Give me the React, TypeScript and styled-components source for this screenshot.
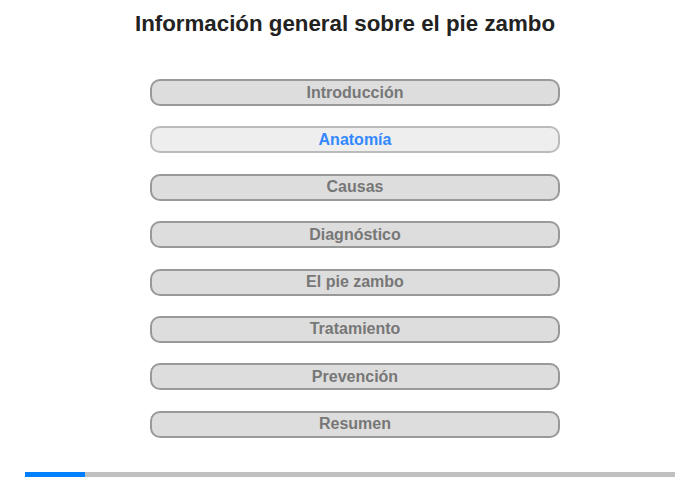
import React from "react";
import styled, { createGlobalStyle } from "styled-components";

const GlobalStyle = createGlobalStyle`
  body {
    margin: 0;
    background: #fff;
    font-family: "Liberation Sans", Arial, sans-serif;
  }
`;

const Page = styled.div`
  width: 700px;
  height: 480px;
  display: flex;
  flex-direction: column;
  align-items: center;
`;

const Title = styled.h1`
  margin: 11px 10px 0 0;
  font-size: 22.3px;
  line-height: 26px;
  font-weight: bold;
  color: #222;
  text-align: center;
`;

const Menu = styled.div`
  margin: 42px 0 0 10px;
  display: flex;
  flex-direction: column;
  gap: 20.4px;
`;

const Item = styled.div<{ $active?: boolean }>`
  box-sizing: border-box;
  width: 410px;
  height: 27px;
  border: 2px solid ${(p) => (p.$active ? "#bbb" : "#999")};
  border-radius: 10px;
  background: ${(p) => (p.$active ? "#eee" : "#ddd")};
  color: ${(p) => (p.$active ? "#3388ff" : "#777")};
  font-size: 16px;
  font-weight: bold;
  display: flex;
  align-items: center;
  justify-content: center;
`;

const Track = styled.div`
  margin-top: 34px;
  width: 650px;
  height: 5px;
  background: #c0c0c0;
`;

const Fill = styled.div`
  height: 100%;
  background: #0080ff;
`;

const items = [
  "Introducción",
  "Anatomía",
  "Causas",
  "Diagnóstico",
  "El pie zambo",
  "Tratamiento",
  "Prevención",
  "Resumen",
];

export default function App() {
  const active = 1;
  return (
    <>
      <GlobalStyle />
      <Page>
        <Title>Información general sobre el pie zambo</Title>
        <Menu>
          {items.map((t, i) => (
            <Item key={t} $active={i === active}>
              {t}
            </Item>
          ))}
        </Menu>
        <Track>
          <Fill style={{ width: `${(60 / 650) * 100}%` }} />
        </Track>
      </Page>
    </>
  );
}
